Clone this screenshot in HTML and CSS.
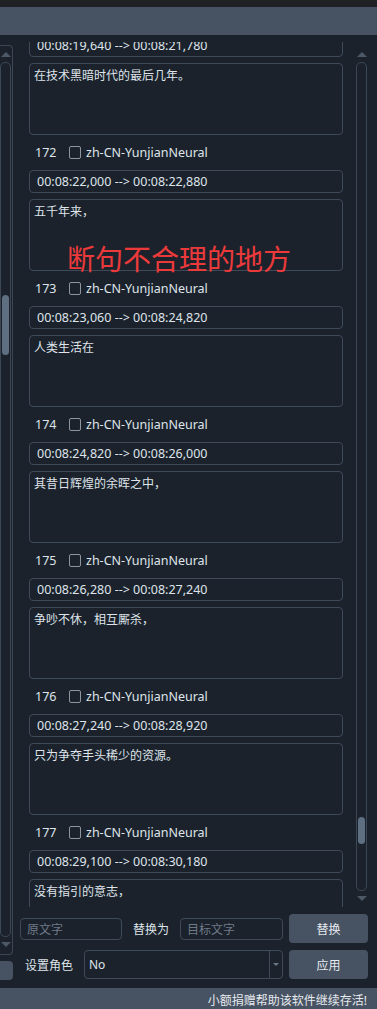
FILE: index.html
```html
<!DOCTYPE html>
<html lang="zh-CN">
<head>
<meta charset="utf-8">
<title>字幕配音</title>
<link rel="stylesheet" href="styles.css">
</head>
<body>
<div class="app">
  <div class="topstrip"></div>
  <div class="header"></div>
  <div class="main">
    <div class="leftcol">
      <div class="leftpanel">
        <div class="vscroll">
          <div class="arrow up"></div>
          <div class="track"><div class="thumb thumb-left"></div></div>
          <div class="arrow down"></div>
        </div>
      </div>
      <div class="leftbtn"></div>
    </div>
    <div class="rightcol">
      <div class="listarea">
        <div class="viewport">
          <div class="entries">
            <div class="entry entry-partial">
              <div class="timebox">00:08:19,640 --&gt; 00:08:21,780</div>
              <div class="textbox">在技术黑暗时代的最后几年。</div>
            </div>
            <div class="entry">
              <div class="entry-head"><span class="num">172</span><span class="check"></span><span class="voice">zh-CN-YunjianNeural</span></div>
              <div class="timebox">00:08:22,000 --&gt; 00:08:22,880</div>
              <div class="textbox">五千年来，</div>
            </div>
            <div class="entry">
              <div class="entry-head"><span class="num">173</span><span class="check"></span><span class="voice">zh-CN-YunjianNeural</span></div>
              <div class="timebox">00:08:23,060 --&gt; 00:08:24,820</div>
              <div class="textbox">人类生活在</div>
            </div>
            <div class="entry">
              <div class="entry-head"><span class="num">174</span><span class="check"></span><span class="voice">zh-CN-YunjianNeural</span></div>
              <div class="timebox">00:08:24,820 --&gt; 00:08:26,000</div>
              <div class="textbox">其昔日辉煌的余晖之中，</div>
            </div>
            <div class="entry">
              <div class="entry-head"><span class="num">175</span><span class="check"></span><span class="voice">zh-CN-YunjianNeural</span></div>
              <div class="timebox">00:08:26,280 --&gt; 00:08:27,240</div>
              <div class="textbox">争吵不休，相互厮杀，</div>
            </div>
            <div class="entry">
              <div class="entry-head"><span class="num">176</span><span class="check"></span><span class="voice">zh-CN-YunjianNeural</span></div>
              <div class="timebox">00:08:27,240 --&gt; 00:08:28,920</div>
              <div class="textbox">只为争夺手头稀少的资源。</div>
            </div>
            <div class="entry">
              <div class="entry-head"><span class="num">177</span><span class="check"></span><span class="voice">zh-CN-YunjianNeural</span></div>
              <div class="timebox">00:08:29,100 --&gt; 00:08:30,180</div>
              <div class="textbox">没有指引的意志，</div>
            </div>
          </div>
          <div class="annotation">断句不合理的地方</div>
        </div>
        <div class="vscroll vscroll-right">
          <div class="arrow up"></div>
          <div class="track"><div class="thumb thumb-right"></div></div>
          <div class="arrow down"></div>
        </div>
      </div>
      <div class="row row1">
        <div class="field field-src">原文字</div>
        <span class="label label-to">替换为</span>
        <div class="field field-dst">目标文字</div>
        <div class="btn">替换</div>
      </div>
      <div class="row row2">
        <span class="label label-role">设置角色</span>
        <div class="combo"><span class="combo-value">No</span><span class="combo-drop"><span class="combo-arrow"></span></span></div>
        <div class="btn">应用</div>
      </div>
    </div>
  </div>
  <div class="status">小额捐赠帮助该软件继续存活!</div>
</div>
</body>
</html>
```
FILE: styles.css
```css
* { box-sizing: border-box; }
html, body { margin: 0; padding: 0; }
body {
  width: 377px;
  height: 1009px;
  overflow: hidden;
  background: #1b222c;
  font-family: "Noto Sans", "Noto Sans CJK SC", sans-serif;
  font-size: 12px;
  color: #dfe4ea;
}
.app { display: flex; flex-direction: column; height: 1009px; }
.topstrip { height: 7px; background: #1f2125; }
.header { height: 28px; background: #475363; }
.main { display: flex; height: 953px; }

/* left column */
.leftcol { width: 13px; display: flex; flex-direction: column; padding-top: 10px; }
.leftpanel {
  height: 910px;
  border: 1px solid #3c4756;
  border-left: none;
  border-radius: 0 4px 4px 0;
  width: 13px;
  padding-top: 6px;
}
.leftpanel .vscroll { width: 11px; }
.leftpanel .track { height: 875px; }
.leftbtn { margin-top: 6px; height: 19px; background: #475363; border-radius: 0 4px 4px 0; }

/* scrollbars */
.vscroll { display: flex; flex-direction: column; align-items: center; }
.arrow { width: 0; height: 0; border-left: 5px solid transparent; border-right: 5px solid transparent; }
.arrow.up { border-bottom: 5px solid #4d5866; margin-bottom: 5px; }
.arrow.down { border-top: 5px solid #4d5866; margin-top: 5px; }
.track {
  width: 11px;
  border: 1px solid #3c4756;
  border-radius: 5px;
  padding: 0 1px;
}
.thumb { width: 100%; background: #5d6f81; border-radius: 4px; }
.thumb-left { margin-top: 232px; height: 60px; }
.thumb-right { margin-top: 754px; height: 27px; }

/* right column */
.rightcol { width: 364px; display: flex; flex-direction: column; }
.listarea { margin-top: 7px; height: 865px; display: flex; position: relative; }
.viewport { width: 330px; padding-left: 16px; overflow: hidden; position: relative; }
.vscroll-right { width: 11px; margin-left: 13px; padding-top: 10px; }
.vscroll-right .track { height: 829px; }

.entries { display: flex; flex-direction: column; }
.entry { display: flex; flex-direction: column; width: 314px; margin-bottom: 6px; }
.entry-partial .timebox { margin-top: -8px; }
.entry-head { height: 22px; display: flex; align-items: center; padding-left: 6px; font-size: 12.5px; }
.num { width: 34px; }
.check { width: 12px; height: 13px; border: 1px solid #8b949f; border-radius: 2px; margin-right: 5px; }
.timebox {
  margin-top: 7px;
  height: 23px;
  border: 1px solid #3f4a59;
  border-radius: 4px;
  padding-left: 7px;
  display: flex;
  align-items: center;
  font-size: 12.5px;
}
.textbox {
  margin-top: 6px;
  height: 72px;
  border: 1px solid #3f4a59;
  border-radius: 4px;
  padding: 3px 4px;
  line-height: 18px;
}
.annotation {
  position: absolute;
  left: 54px;
  top: 198px;
  font-size: 28px;
  line-height: 36px;
  color: #ec3a3b;
  font-family: "Noto Sans CJK SC", sans-serif;
}

/* bottom controls */
.row { display: flex; align-items: center; height: 29px; margin-top: 7px; }
.field {
  height: 22px;
  border: 1px solid #3f4a59;
  border-radius: 4px;
  color: #6f7a88;
  padding-left: 6px;
  display: flex;
  align-items: center;
}
.field-src { margin-left: 7px; width: 102px; }
.label-to { margin-left: 11px; width: 47px; }
.field-dst { width: 103px; }
.btn {
  margin-left: 6px;
  width: 79px;
  height: 29px;
  background: #475363;
  border-radius: 4px;
  display: flex;
  align-items: center;
  justify-content: center;
  color: #e6e9ee;
}
.label-role { margin-left: 12px; width: 59px; }
.combo {
  width: 199px;
  height: 29px;
  border: 1px solid #3f4a59;
  border-radius: 4px;
  display: flex;
  align-items: center;
}
.combo-value { flex: 1; padding-left: 4px; }
.combo-drop {
  width: 13px;
  height: 100%;
  border-left: 1px solid #3f4a59;
  display: flex;
  align-items: center;
  justify-content: center;
}
.combo-arrow { width: 0; height: 0; border-left: 3px solid transparent; border-right: 3px solid transparent; border-top: 3px solid #6b7785; }

.status {
  height: 21px;
  background: #475363;
  display: flex;
  align-items: center;
  justify-content: flex-end;
  padding-right: 10px;
  padding-top: 2px;
  color: #e6e9ee;
}
```
